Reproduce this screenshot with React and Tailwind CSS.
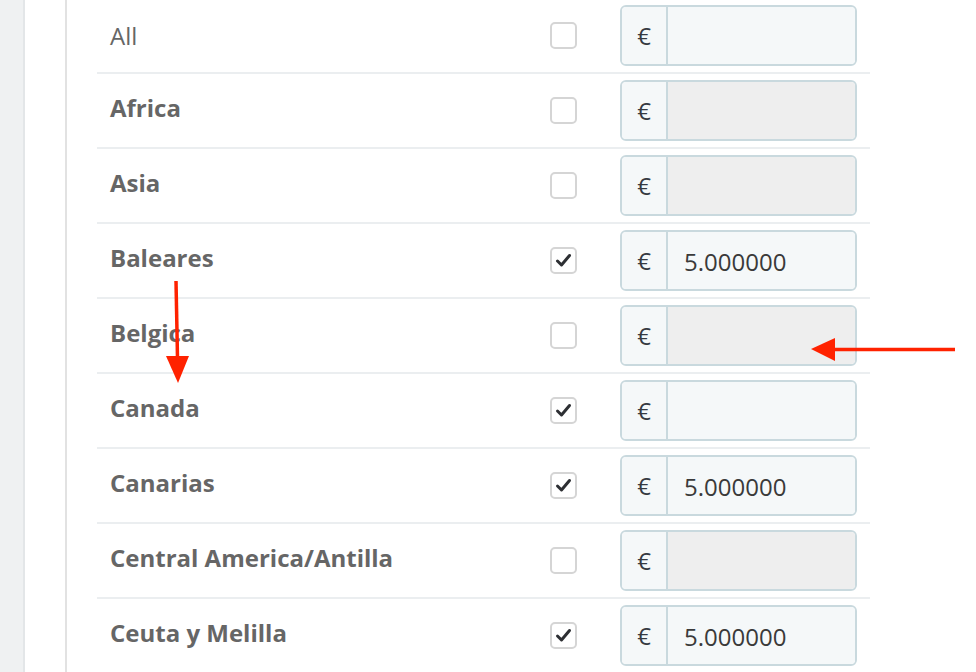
import React from 'react';

const rows = [
  { name: 'All', bold: false, checked: false, value: '', disabled: false },
  { name: 'Africa', bold: true, checked: false, value: '', disabled: true },
  { name: 'Asia', bold: true, checked: false, value: '', disabled: true },
  { name: 'Baleares', bold: true, checked: true, value: '5.000000', disabled: false },
  { name: 'Belgica', bold: true, checked: false, value: '', disabled: true },
  { name: 'Canada', bold: true, checked: true, value: '', disabled: false },
  { name: 'Canarias', bold: true, checked: true, value: '5.000000', disabled: false },
  { name: 'Central America/Antilla', bold: true, checked: false, value: '', disabled: true },
  { name: 'Ceuta y Melilla', bold: true, checked: true, value: '5.000000', disabled: false },
];

const Checkbox = ({ checked }) => (
  <div className="w-[27px] h-[27px] rounded-[5px] border-2 border-[#d5d5d5] bg-white flex items-center justify-center">
    {checked && (
      <svg width="17" height="15" viewBox="0 0 17 15">
        <path d="M2.5 8 L6.5 12 L14.5 2.5" fill="none" stroke="#2d2f33" strokeWidth="3" strokeLinecap="round" strokeLinejoin="round" />
      </svg>
    )}
  </div>
);

const PriceInput = ({ value, disabled }) => (
  <div className="flex w-[237px] h-[61px] rounded-[6px] border-2 border-[#c9d9de] overflow-hidden">
    <div className="w-[46px] flex items-center justify-center bg-[#f5f8f9] border-r-2 border-[#c9d9de] text-[24px] text-[#363a41]">
      €
    </div>
    <div className={`flex-1 flex items-center pl-[16px] pt-[2px] text-[24px] text-[#3a3a3a] ${disabled ? 'bg-[#eeeeee]' : 'bg-[#f5f8f9]'}`}>
      {value}
    </div>
  </div>
);

const App = () => {
  return (
    <div className="relative w-[976px] h-[672px] overflow-hidden bg-white flex" style={{ fontFamily: '"Open Sans", sans-serif' }}>
      <div className="w-[25px] shrink-0 bg-[#eff1f2] border-r-2 border-[#e3e6e8]" />
      <div className="w-[42px] shrink-0 bg-white border-r-2 border-[#e2e2e2]" />
      <div className="pl-[30px]">
        <div className="w-[773px] -mt-[1px]">
          {rows.map((r) => (
            <div key={r.name} className="h-[75px] flex items-center border-b-2 border-[#ebeef0]">
              <div className={`w-[453px] pl-[13px] leading-none text-[24px] text-[#666666] ${r.bold ? 'font-bold -mt-[6px]' : 'font-normal'}`}>
                {r.name}
              </div>
              <div className="w-[70px]">
                <Checkbox checked={r.checked} />
              </div>
              <PriceInput value={r.value} disabled={r.disabled} />
            </div>
          ))}
        </div>
      </div>

      <svg className="absolute left-0 top-0 pointer-events-none" width="976" height="672">
        <line x1="176" y1="281" x2="177.5" y2="358" stroke="#ff2200" strokeWidth="3.5" />
        <polygon points="166,356 189,356 178,383" fill="#ff2200" />
        <line x1="955" y1="349.5" x2="832" y2="349.5" stroke="#ff2200" strokeWidth="3.5" />
        <polygon points="811,349 835,338 835,361" fill="#ff2200" />
      </svg>
    </div>
  );
};

export default App;
